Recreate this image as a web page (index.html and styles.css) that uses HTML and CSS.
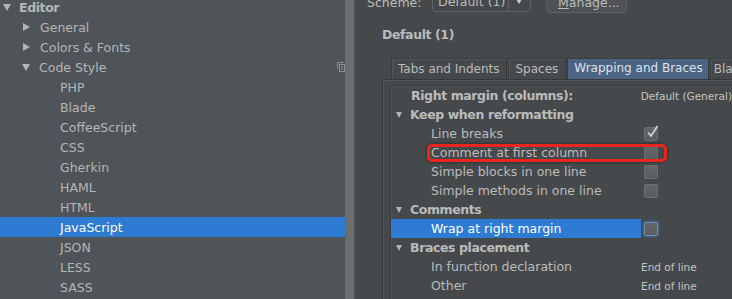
FILE: index.html
```html
<!DOCTYPE html>
<html>
<head>
  <meta charset="UTF-8">
  <title>Code Style - JavaScript</title>
  <link rel="stylesheet" href="styles.css">
</head>
<body>
  <div class="window">
    <div class="tree">
      <div class="tree-list">
        <div class="node lvl0 bold"><span class="tri down"></span>Editor</div>
        <div class="node lvl1"><span class="tri right"></span>General</div>
        <div class="node lvl1"><span class="tri right"></span>Colors &amp; Fonts</div>
        <div class="node lvl1"><span class="tri down"></span>Code Style
          <svg class="copy-icon" width="8" height="10" viewBox="0 0 8 10">
            <path d="M0.5 0.5h6M0.5 0.5v6" stroke="#8d9193" fill="none"/>
            <rect x="2.5" y="2.5" width="5" height="7" stroke="#8d9193" fill="none"/>
            <path d="M4 5h2M4 7h2" stroke="#8d9193"/>
          </svg>
        </div>
        <div class="node lvl2">PHP</div>
        <div class="node lvl2">Blade</div>
        <div class="node lvl2">CoffeeScript</div>
        <div class="node lvl2">CSS</div>
        <div class="node lvl2">Gherkin</div>
        <div class="node lvl2">HAML</div>
        <div class="node lvl2">HTML</div>
        <div class="node lvl2 selected">JavaScript</div>
        <div class="node lvl2">JSON</div>
        <div class="node lvl2">LESS</div>
        <div class="node lvl2">SASS</div>
      </div>
    </div>

    <div class="splitter"></div>

    <div class="settings">
      <div class="scheme">
        <span class="scheme-label">Scheme:</span>
        <div class="combo"><span class="combo-text">Default (1)</span><span class="combo-arrow"></span></div>
        <button class="manage"><u>M</u>anage...</button>
      </div>

      <div class="title bold">Default (1)</div>

      <div class="tabs">
        <div class="tab">Tabs and Indents</div>
        <div class="tab">Spaces</div>
        <div class="tab active">Wrapping and Braces</div>
        <div class="tab more">Bla</div>
      </div>

      <div class="panel">
        <div class="options">
          <div class="opt">
            <div class="label top bold">Right margin (columns):</div>
            <div class="value">Default (General)</div>
          </div>
          <div class="opt">
            <div class="label group bold"><span class="tri small"></span>Keep when reformatting</div>
          </div>
          <div class="opt">
            <div class="label child">Line breaks</div>
            <div class="value"><span class="check">
              <svg width="14" height="14" viewBox="0 0 14 14"><path d="M3 7.5l3 3.5 6.5-10" stroke="#cfcfcf" stroke-width="1.8" fill="none"/></svg>
            </span></div>
          </div>
          <div class="opt">
            <div class="label child">Comment at first column</div>
            <div class="value"><span class="check"></span></div>
            <div class="mark"></div>
          </div>
          <div class="opt">
            <div class="label child">Simple blocks in one line</div>
            <div class="value"><span class="check"></span></div>
          </div>
          <div class="opt">
            <div class="label child">Simple methods in one line</div>
            <div class="value"><span class="check"></span></div>
          </div>
          <div class="opt">
            <div class="label group bold"><span class="tri small"></span>Comments</div>
          </div>
          <div class="opt">
            <div class="label child current">Wrap at right margin</div>
            <div class="value"><span class="check focus"></span></div>
          </div>
          <div class="opt">
            <div class="label group bold"><span class="tri small"></span>Braces placement</div>
          </div>
          <div class="opt">
            <div class="label child">In function declaration</div>
            <div class="value">End of line</div>
          </div>
          <div class="opt">
            <div class="label child">Other</div>
            <div class="value">End of line</div>
          </div>
        </div>
      </div>
    </div>
  </div>
</body>
</html>
```

FILE: styles.css
```css
* {
  box-sizing: border-box;
}

body {
  margin: 0;
  font-family: "DejaVu Sans", sans-serif;
  font-size: 12.5px;
  color: #bbbbbb;
  background-color: #46494b;
  overflow: hidden;
}

.bold {
  font-weight: bold;
  letter-spacing: -0.4px;
}

.window {
  display: flex;
  height: 299px;
}

/* left tree */
.tree {
  width: 345px;
  background-color: #4e5457;
  overflow: hidden;
}

.tree-list {
  margin-top: -3px;
}

.node {
  height: 20px;
  display: flex;
  align-items: center;
  white-space: nowrap;
  color: #b4b6b7;
}

.lvl0 { padding-left: 3px; }
.lvl1 { padding-left: 23px; }
.lvl2 { padding-left: 60px; }

.node .tri {
  margin-right: 8px;
}

.node.selected {
  background-color: #2e7bd3;
  color: #ffffff;
}

.copy-icon {
  margin-left: auto;
  margin-right: 0;
}

.tri {
  display: inline-block;
  width: 0;
  height: 0;
}

.tri.down {
  border-left: 4.5px solid transparent;
  border-right: 4.5px solid transparent;
  border-top: 7px solid #b2b4b5;
}

.tri.right {
  border-top: 4px solid transparent;
  border-bottom: 4px solid transparent;
  border-left: 7px solid #b2b4b5;
  margin-right: 10px;
}

.lvl0 .tri.down {
  margin-right: 8px;
}

.lvl1 .tri.down {
  margin-left: -1px;
  margin-right: 9px;
}

.splitter {
  width: 11px;
  background: linear-gradient(to right, #6b6c6d 0, #6e6f70 8px, #5a5c5e 9px, #4c4f51 10px, #47494b 11px);
}

/* right settings */
.settings {
  flex: 1;
  min-width: 0;
  padding-left: 26px;
  overflow: hidden;
}

.scheme {
  display: flex;
  align-items: center;
  height: 24px;
  margin-top: -10px;
  margin-left: -15px;
  white-space: nowrap;
}

.scheme-label {
  width: 65px;
}

.combo {
  display: flex;
  align-items: center;
  width: 99px;
  height: 21px;
  margin-top: -2px;
  border: 1px solid #5f6264;
  border-radius: 3px;
}

.combo-text {
  width: 76px;
  padding-left: 5px;
  border-right: 1px solid #5f6264;
  height: 100%;
  line-height: 19px;
}

.combo-arrow {
  margin-left: 7px;
  border-left: 3.5px solid transparent;
  border-right: 3.5px solid transparent;
  border-top: 5px solid #c9c9c9;
}

.manage {
  margin-left: 15px;
  width: 81px;
  height: 22px;
  font-family: inherit;
  font-size: 12.5px;
  color: #bbbbbb;
  text-align: left;
  padding: 0 0 0 11px;
  background: linear-gradient(#53575a, #4d5154);
  border: 1px solid #606366;
  border-radius: 4px;
}

.title {
  margin-top: 11px;
  height: 20px;
  line-height: 20px;
}

.tabs {
  display: flex;
  margin-top: 13px;
  margin-left: 9px;
  height: 21px;
  white-space: nowrap;
}

.tab {
  height: 21px;
  line-height: 21px;
  padding: 0 7px 0 6px;
  margin-right: 1px;
  border: 1px solid #393c3e;
  border-bottom: none;
  box-shadow: inset 1px 1px 0 #54575a;
  font-size: 12px;
}

.tab.active {
  background-color: #4b6484;
  color: #dde3ea;
  line-height: 18px;
  padding: 0 5px 0 6px;
  margin-right: 1px;
  box-shadow: none;
}

.tab.more {
  padding-left: 3px;
}

.panel {
  border-top: 1px solid #36393b;
  border-left: 1px solid #36393b;
  box-shadow: inset 1px 1px 0 #55585b;
  padding: 5px 0 0 7px;
  height: 230px;
}

.options {
  border-top: 1px solid #3a3d3f;
  border-left: 1px solid #3a3d3f;
  box-shadow: inset 1px 1px 0 #505356;
  height: 100%;
}

.opt {
  position: relative;
  display: flex;
  height: 19px;
  align-items: center;
  white-space: nowrap;
}

.label {
  width: 250px;
  height: 19px;
  line-height: 19px;
  display: flex;
  align-items: center;
}

.label.top { padding-left: 20px; }
.label.group { padding-left: 5px; }
.label.child { padding-left: 40px; }

.tri.small {
  border-left: 3.5px solid transparent;
  border-right: 3.5px solid transparent;
  border-top: 6px solid #b2b4b5;
  margin-right: 8px;
}

.label.current {
  background-color: #2e7bd3;
  color: #ffffff;
}

.value {
  font-size: 10.5px;
  color: #c4c4c4;
}

.check {
  display: block;
  margin-left: 3px;
  width: 14px;
  height: 14px;
  border: 1px solid #6c6f72;
  border-radius: 2px;
  background: linear-gradient(#636668, #5a5d5f);
}

.check svg {
  display: block;
  margin: -3px 0 0 0;
  overflow: visible;
}

.check.focus {
  border-color: #6e8fb3;
  box-shadow: 0 0 2px 1px #3c6a9c;
}

/* red annotation around the option */
.mark {
  position: absolute;
  left: 36px;
  top: 1px;
  width: 240px;
  height: 18px;
  border: 3px solid #e8261f;
  border-radius: 5px;
  box-shadow: 0 0 3px rgba(0, 0, 0, 0.6);
}
```
